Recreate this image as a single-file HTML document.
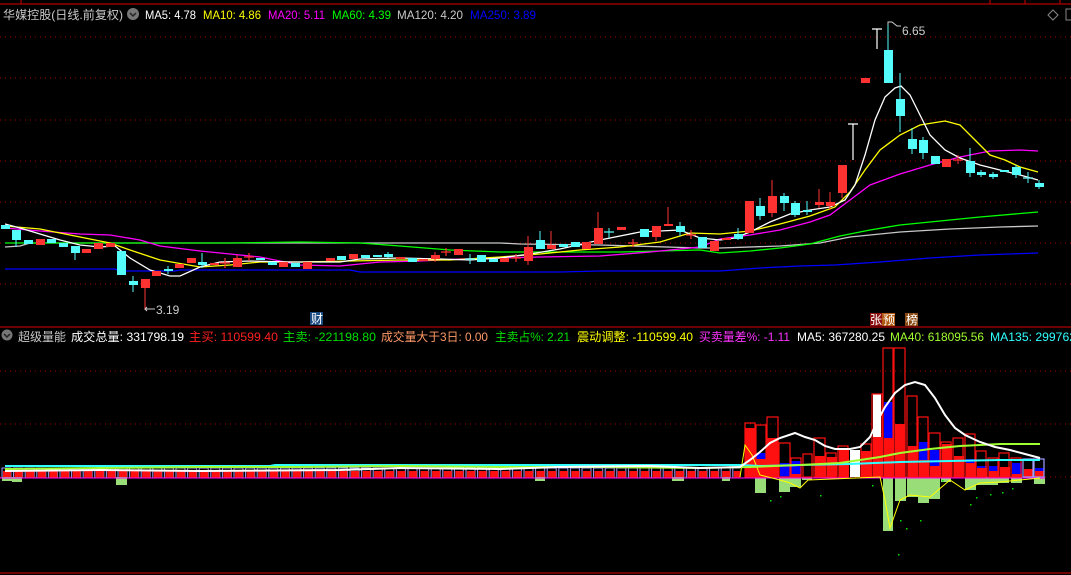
<!DOCTYPE html>
<html><head><meta charset="utf-8"><style>
html,body{margin:0;padding:0;background:#000;width:1071px;height:575px;overflow:hidden}
svg{display:block}
text{font-family:"Liberation Sans","Noto Sans CJK SC",sans-serif;font-size:12px}
</style></head><body>
<svg width="1071" height="575" viewBox="0 0 1071 575" xmlns="http://www.w3.org/2000/svg">
<rect width="1071" height="575" fill="#000"/>
<g stroke="#b00000" stroke-width="1.2">
<line x1="0" y1="4" x2="1071" y2="4"/>
<line x1="21" y1="0" x2="21" y2="4"/>
<line x1="990" y1="0" x2="990" y2="4"/><line x1="1025" y1="0" x2="1025" y2="4"/><line x1="1060" y1="0" x2="1060" y2="4"/>
<line x1="0" y1="327" x2="1071" y2="327"/>
<line x1="0" y1="573" x2="1071" y2="573"/>
</g>
<g stroke="#a00000" stroke-width="1" stroke-dasharray="1,4">
<line x1="0" y1="37" x2="1071" y2="37"/><line x1="0" y1="78" x2="1071" y2="78"/>
<line x1="0" y1="120" x2="1071" y2="120"/><line x1="0" y1="161" x2="1071" y2="161"/>
<line x1="0" y1="202" x2="1071" y2="202"/><line x1="0" y1="243" x2="1071" y2="243"/>
<line x1="0" y1="284" x2="1071" y2="284"/>
<line x1="0" y1="371" x2="1071" y2="371"/><line x1="0" y1="424" x2="1071" y2="424"/>
<line x1="0" y1="477" x2="1071" y2="477"/>
</g>
<text x="3" y="19" fill="#c8c8c8" font-size="13" textLength="120" lengthAdjust="spacingAndGlyphs">华媒控股(日线.前复权)</text>
<circle cx="133" cy="14" r="6" fill="#777"/><path d="M130 13l3 3 3-3" stroke="#222" stroke-width="1.5" fill="none"/>
<text x="145" y="19" fill="#fff" font-size="13" textLength="51" lengthAdjust="spacingAndGlyphs">MA5: 4.78</text>
<text x="203" y="19" fill="#ffff00" font-size="13" textLength="58" lengthAdjust="spacingAndGlyphs">MA10: 4.86</text>
<text x="268" y="19" fill="#ff00ff" font-size="13" textLength="57" lengthAdjust="spacingAndGlyphs">MA20: 5.11</text>
<text x="332" y="19" fill="#00ff00" font-size="13" textLength="59" lengthAdjust="spacingAndGlyphs">MA60: 4.39</text>
<text x="397" y="19" fill="#c8c8c8" font-size="13" textLength="66" lengthAdjust="spacingAndGlyphs">MA120: 4.20</text>
<text x="470" y="19" fill="#0000ff" font-size="13" textLength="66" lengthAdjust="spacingAndGlyphs">MA250: 3.89</text>
<path d="M1053 10l5 5-5 5-5-5z" stroke="#888" fill="none"/>
<rect x="1066" y="9" width="6" height="11" stroke="#888" fill="none"/>

<g fill="none" stroke-width="1.3">
<polyline stroke="#0000ff" points="5,269 115,269 120,271 175,271 180,270 350,270 360,272 560,272 600,271 720,271 760,268 800,266 835,265 880,262 930,258 980,255 1038,253"/>
<polyline stroke="#c8c8c8" points="5,247 20,246 30,243 110,243 500,243 520,244 600,245 700,248 720,248 780,246 820,243 850,237 900,232 950,229 1000,227 1038,226"/>
<polyline stroke="#00ff00" points="5,243 230,243 300,242 360,243 400,246 450,250 500,252 620,252 700,250 720,253 750,251 780,248 810,244 840,236 870,230 900,225 940,221 980,217 1038,212"/>
<polyline stroke="#ff00ff" points="5,228 40,231 80,234 110,235 140,240 160,246 200,251 230,254 260,257 300,265 340,266 380,262 420,261 460,259 500,258 540,257 600,256 650,252 700,247 720,239 750,235 780,230 810,222 830,215 850,200 870,185 900,174 930,165 960,157 990,151 1020,150 1038,151"/>
<polyline stroke="#ffff00" points="5,226 40,229 60,233 80,237 110,243 130,250 160,260 200,267 230,265 260,262 300,262 350,261 400,260 450,260 500,257 540,254 580,250 620,247 660,242 690,233 720,234 750,231 780,224 810,216 835,207 850,192 865,170 880,150 900,135 920,125 945,121 960,125 975,140 990,155 1005,160 1020,167 1038,172"/>
<polyline stroke="#ffffff" points="5,224 20,228 40,234 60,240 80,245 100,247 115,246 130,258 150,270 170,276 180,276 200,267 220,262 250,261 290,262 340,262 360,259 400,258 440,259 470,260 500,258 530,254 560,249 600,240 640,232 680,230 700,238 720,240 735,238 750,232 770,222 790,214 810,210 830,207 845,200 855,185 865,155 875,120 885,97 895,88 901,86 910,95 920,115 930,135 945,150 960,158 980,165 1000,170 1020,175 1038,180"/>
</g>

<g stroke="#54fcfc" stroke-width="1">
<line x1="16" y1="230" x2="16" y2="247"/><line x1="75" y1="246" x2="75" y2="260"/><line x1="121" y1="251" x2="121" y2="275"/>
<line x1="133" y1="276" x2="133" y2="292"/><line x1="202" y1="253" x2="202" y2="268"/><line x1="388" y1="252" x2="388" y2="258"/>
<line x1="540" y1="231" x2="540" y2="249"/><line x1="760" y1="198" x2="760" y2="220"/><line x1="784" y1="193" x2="784" y2="211"/>
<line x1="795" y1="201" x2="795" y2="217"/><line x1="807" y1="201" x2="807" y2="215"/><line x1="888" y1="25" x2="888" y2="83"/>
<line x1="900" y1="73" x2="900" y2="132"/><line x1="912" y1="128" x2="912" y2="154"/><line x1="923" y1="137" x2="923" y2="159"/>
<line x1="970" y1="148" x2="970" y2="177"/><line x1="981" y1="170" x2="981" y2="177"/><line x1="993" y1="172" x2="993" y2="179"/>
<line x1="1016" y1="165" x2="1016" y2="178"/><line x1="1039" y1="180" x2="1039" y2="189"/><line x1="1028" y1="172" x2="1028" y2="183"/>
<line x1="680" y1="222" x2="680" y2="236"/><line x1="738" y1="228" x2="738" y2="240"/><line x1="609" y1="228" x2="609" y2="238"/>
<line x1="470" y1="254" x2="470" y2="264"/><line x1="168" y1="266" x2="168" y2="274"/>
</g>
<g stroke="#ff3232" stroke-width="1">
<line x1="145" y1="279" x2="145" y2="310"/><line x1="528" y1="236" x2="528" y2="265"/><line x1="551" y1="231" x2="551" y2="249"/>
<line x1="598" y1="212" x2="598" y2="244"/><line x1="656" y1="226" x2="656" y2="241"/><line x1="668" y1="207" x2="668" y2="226"/>
<line x1="772" y1="180" x2="772" y2="217"/><line x1="819" y1="189" x2="819" y2="208"/><line x1="830" y1="192" x2="830" y2="210"/>
<line x1="842" y1="165" x2="842" y2="198"/><line x1="958" y1="155" x2="958" y2="164"/><line x1="435" y1="252" x2="435" y2="262"/>
<line x1="237" y1="255" x2="237" y2="267"/>
</g>
<g stroke-width="1.2">
<path d="M220 263h10M225 258v10M244 257h10M249 253v8M441 252h10M446 248v8M511 258h10M516 254v8M628 243h10M633 239v8M686 235h10M691 230v9M953 160h10M1023 178h10" stroke="#ff3232"/>
<path d="M465 259h10M604 232h10M1023 178h10" stroke="#54fcfc"/>
</g>
<g stroke="#fff" stroke-width="1.2"><path d="M848 124h10M853 124v36M872 29h10M877 29v20"/></g>
<g fill="#54fcfc">
<rect x="1" y="225" width="9" height="4"/><rect x="12" y="230" width="9" height="10"/><rect x="24" y="240" width="9" height="4"/>
<rect x="47" y="239" width="9" height="4"/><rect x="59" y="243" width="9" height="4"/><rect x="71" y="246" width="9" height="7"/>
<rect x="117" y="251" width="9" height="24"/><rect x="129" y="281" width="9" height="4"/><rect x="164" y="269" width="9" height="2"/>
<rect x="198" y="262" width="9" height="3"/><rect x="256" y="258" width="9" height="2"/><rect x="268" y="262" width="9" height="3"/>
<rect x="291" y="263" width="9" height="4"/><rect x="337" y="256" width="9" height="4"/><rect x="361" y="255" width="9" height="3"/>
<rect x="373" y="255" width="9" height="2"/><rect x="384" y="254" width="9" height="3"/><rect x="408" y="258" width="9" height="4"/>
<rect x="477" y="255" width="9" height="7"/><rect x="489" y="259" width="9" height="3"/><rect x="536" y="240" width="9" height="9"/>
<rect x="559" y="244" width="9" height="3"/><rect x="571" y="242" width="9" height="5"/><rect x="640" y="229" width="9" height="8"/>
<rect x="676" y="226" width="9" height="6"/><rect x="698" y="237" width="9" height="11"/><rect x="734" y="234" width="9" height="5"/>
<rect x="756" y="206" width="9" height="10"/><rect x="780" y="196" width="9" height="7"/><rect x="791" y="203" width="9" height="12"/>
<rect x="803" y="210" width="9" height="2"/><rect x="884" y="50" width="9" height="33"/><rect x="896" y="99" width="9" height="17"/>
<rect x="908" y="139" width="9" height="10"/><rect x="919" y="140" width="9" height="13"/><rect x="931" y="156" width="9" height="8"/>
<rect x="966" y="161" width="9" height="12"/><rect x="977" y="172" width="9" height="3"/><rect x="989" y="174" width="9" height="3"/>
<rect x="1000" y="170" width="9" height="2"/><rect x="1012" y="167" width="9" height="8"/><rect x="1035" y="183" width="9" height="4"/>
</g>
<g fill="#ff3232">
<rect x="36" y="239" width="9" height="6"/><rect x="82" y="249" width="9" height="4"/><rect x="94" y="243" width="9" height="6"/>
<rect x="106" y="243" width="9" height="4"/><rect x="141" y="279" width="9" height="9"/><rect x="152" y="271" width="9" height="5"/>
<rect x="175" y="264" width="9" height="4"/><rect x="187" y="258" width="9" height="5"/><rect x="210" y="263" width="9" height="2"/>
<rect x="233" y="258" width="9" height="9"/><rect x="279" y="262" width="9" height="5"/><rect x="303" y="262" width="9" height="7"/>
<rect x="326" y="258" width="9" height="3"/><rect x="349" y="254" width="9" height="5"/><rect x="396" y="257" width="9" height="2"/>
<rect x="419" y="259" width="9" height="2"/><rect x="431" y="255" width="9" height="4"/><rect x="454" y="249" width="9" height="6"/>
<rect x="500" y="258" width="9" height="4"/><rect x="524" y="247" width="9" height="14"/><rect x="547" y="245" width="9" height="4"/>
<rect x="582" y="242" width="9" height="7"/><rect x="594" y="228" width="9" height="16"/><rect x="617" y="227" width="9" height="3"/>
<rect x="652" y="226" width="9" height="11"/><rect x="664" y="224" width="9" height="2"/><rect x="710" y="241" width="9" height="10"/>
<rect x="722" y="238" width="9" height="2"/><rect x="745" y="201" width="9" height="32"/><rect x="768" y="196" width="9" height="17"/>
<rect x="815" y="202" width="9" height="3"/><rect x="826" y="202" width="9" height="4"/><rect x="838" y="165" width="9" height="28"/>
<rect x="861" y="78" width="9" height="5"/><rect x="942" y="159" width="9" height="8"/>
</g>
<g stroke="#ccc" stroke-width="1" fill="none"><path d="M145 309h10M147 307l-2 2 2 2M888 25v-3h4l5 4h4"/></g>
<text x="156" y="314" fill="#ccc" font-size="11">3.19</text>
<text x="902" y="35" fill="#ccc" font-size="11">6.65</text>
<rect x="310" y="312" width="13" height="13" fill="#1a4a80"/><text x="311" y="323" fill="#fff" font-size="11">财</text>
<rect x="870" y="313" width="12" height="13" fill="#8b1010"/><text x="870" y="324" fill="#fff" font-size="11">张</text>
<rect x="882" y="313" width="13" height="13" fill="#b05a10"/><text x="883" y="324" fill="#fff" font-size="11">预</text>
<rect x="905" y="313" width="13" height="13" fill="#8b4a13"/><text x="906" y="324" fill="#fff" font-size="11">榜</text>

<circle cx="7" cy="335" r="5.5" fill="#777"/><path d="M4 334l3 3 3-3" stroke="#222" stroke-width="1.5" fill="none"/>
<text x="18" y="341" fill="#c8c8c8" font-size="13" textLength="48" lengthAdjust="spacingAndGlyphs">超级量能</text>
<text x="71" y="341" fill="#fff" font-size="13" textLength="113" lengthAdjust="spacingAndGlyphs">成交总量: 331798.19</text>
<text x="189" y="341" fill="#ff2020" font-size="13" textLength="89" lengthAdjust="spacingAndGlyphs">主买: 110599.40</text>
<text x="283" y="341" fill="#00e000" font-size="13" textLength="93" lengthAdjust="spacingAndGlyphs">主卖: -221198.80</text>
<text x="381" y="341" fill="#ff9966" font-size="13" textLength="107" lengthAdjust="spacingAndGlyphs">成交量大于3日: 0.00</text>
<text x="495" y="341" fill="#00e000" font-size="13" textLength="75" lengthAdjust="spacingAndGlyphs">主卖占%: 2.21</text>
<text x="577" y="341" fill="#ffff00" font-size="13" textLength="116" lengthAdjust="spacingAndGlyphs">震动调整: -110599.40</text>
<text x="699" y="341" fill="#ff33ff" font-size="13" textLength="91" lengthAdjust="spacingAndGlyphs">买卖量差%: -1.11</text>
<text x="797" y="341" fill="#fff" font-size="13" textLength="88" lengthAdjust="spacingAndGlyphs">MA5: 367280.25</text>
<text x="890" y="341" fill="#a0ff30" font-size="13" textLength="94" lengthAdjust="spacingAndGlyphs">MA40: 618095.56</text>
<text x="990" y="341" fill="#30ffff" font-size="13" textLength="86" lengthAdjust="spacingAndGlyphs">MA135: 299762</text>

<defs><pattern id="vp" x="1" y="0" width="11.6" height="575" patternUnits="userSpaceOnUse">
<rect x="1" y="468" width="9" height="10" fill="none" stroke="#a0a0ff" stroke-width="1"/>
<rect x="2" y="471" width="8" height="7" fill="#ff1010"/></pattern></defs>
<rect x="0" y="465" width="740" height="14" fill="url(#vp)"/>
<g fill="#98dd78"><rect x="2" y="477" width="10" height="4"/><rect x="12" y="477" width="10" height="5"/><rect x="116" y="477" width="11" height="8"/><rect x="535" y="477" width="10" height="4"/><rect x="672" y="477" width="12" height="4"/></g>

<g fill="#98dd78">
<rect x="722" y="477" width="8" height="4"/><rect x="755" y="477" width="11" height="16"/><rect x="779" y="477" width="11" height="15"/>
<rect x="790" y="477" width="11" height="10"/><rect x="802" y="477" width="10" height="3"/><rect x="883" y="477" width="10" height="54"/>
<rect x="895" y="477" width="11" height="24"/><rect x="907" y="477" width="11" height="20"/><rect x="918" y="477" width="11" height="26"/>
<rect x="929" y="477" width="11" height="22"/><rect x="941" y="477" width="10" height="5"/><rect x="965" y="477" width="11" height="13"/>
<rect x="976" y="477" width="11" height="8"/><rect x="987" y="477" width="11" height="8"/><rect x="998" y="477" width="11" height="6"/>
<rect x="1011" y="477" width="11" height="6"/><rect x="1034" y="477" width="11" height="7"/>
</g>
<g fill="#ff1010">
<rect x="745" y="428" width="10" height="49"/><rect x="756" y="459" width="10" height="18"/><rect x="767" y="438" width="11" height="39"/>
<rect x="791" y="474" width="10" height="3"/><rect x="815" y="456" width="10" height="21"/><rect x="827" y="457" width="10" height="20"/>
<rect x="839" y="450" width="10" height="27"/><rect x="861" y="451" width="10" height="26"/><rect x="873" y="437" width="10" height="40"/>
<rect x="884" y="438" width="10" height="39"/><rect x="895" y="424" width="10" height="53"/><rect x="908" y="446" width="10" height="31"/>
<rect x="919" y="460" width="10" height="17"/><rect x="930" y="466" width="10" height="11"/><rect x="942" y="444" width="10" height="33"/>
<rect x="954" y="456" width="10" height="21"/><rect x="966" y="463" width="10" height="14"/><rect x="977" y="468" width="10" height="9"/>
<rect x="989" y="471" width="10" height="6"/><rect x="1000" y="467" width="10" height="10"/><rect x="1012" y="474" width="10" height="3"/>
<rect x="1024" y="469" width="9" height="8"/><rect x="1035" y="471" width="9" height="6"/>
</g>
<g fill="#0000ff">
<rect x="756" y="453" width="10" height="6"/><rect x="780" y="463" width="10" height="14"/><rect x="791" y="461" width="10" height="13"/>
<rect x="884" y="402" width="10" height="36"/><rect x="919" y="442" width="10" height="18"/><rect x="930" y="450" width="10" height="16"/>
<rect x="966" y="459" width="10" height="4"/><rect x="977" y="466" width="10" height="2"/><rect x="989" y="466" width="10" height="5"/>
<rect x="1012" y="463" width="10" height="11"/><rect x="1035" y="468" width="9" height="3"/>
</g>
<g fill="#fff"><rect x="850" y="450" width="10" height="27"/><rect x="873" y="394" width="8" height="43"/></g>
<g fill="none" stroke="#ff1010" stroke-width="1.2">
<rect x="745" y="423" width="10" height="54"/><rect x="756" y="425" width="10" height="52"/><rect x="767" y="417" width="11" height="60"/>
<rect x="779" y="443" width="11" height="34"/><rect x="791" y="458" width="10" height="19"/><rect x="803" y="454" width="9" height="23"/>
<rect x="814" y="438" width="11" height="39"/><rect x="826" y="453" width="10" height="24"/><rect x="838" y="446" width="10" height="31"/>
<rect x="861" y="444" width="10" height="33"/><rect x="872" y="394" width="10" height="83"/><rect x="883" y="348" width="10" height="129"/>
<rect x="894" y="348" width="11" height="129"/><rect x="907" y="396" width="10" height="81"/><rect x="918" y="417" width="10" height="60"/>
<rect x="929" y="433" width="11" height="44"/><rect x="941" y="442" width="10" height="35"/><rect x="953" y="438" width="10" height="39"/>
<rect x="965" y="434" width="10" height="43"/><rect x="976" y="451" width="10" height="26"/><rect x="988" y="458" width="10" height="19"/>
<rect x="999" y="453" width="10" height="24"/><rect x="1011" y="458" width="10" height="19"/>
</g>
<g fill="none" stroke="#a0a0ff" stroke-width="1.2"><rect x="1023" y="459" width="10" height="18"/><rect x="1034" y="459" width="10" height="18"/></g>
<line x1="0" y1="478" x2="1045" y2="478" stroke="#ff00ff" stroke-width="1"/>
<g fill="none">
<polyline stroke="#ffff00" stroke-width="1" points="740,477 745,445 752,455 760,475 780,480 790,483 800,488 808,480 880,477 885,500 890,528 900,500 910,495 930,497 950,480 965,490 980,483 1000,482 1040,478"/>
<polyline stroke="#30ffff" stroke-width="2" points="5,466 270,466 275,465 740,465 760,466 800,465 850,464 900,462 950,461 1000,460 1040,460"/>
<polyline stroke="#a0ff30" stroke-width="2" points="5,469 100,468 200,467 300,467 400,466 500,467 600,467 700,468 750,467 800,465 840,463 880,457 900,453 930,449 960,446 1000,444 1040,444"/>
<polyline stroke="#ffffff" stroke-width="2" points="5,471 100,470 200,471 340,470 400,468 500,469 560,467 650,466 700,468 740,467 750,460 760,452 770,443 780,438 795,433 805,437 815,440 825,446 835,449 850,449 860,447 870,437 878,420 885,407 895,393 905,385 915,382 925,385 935,398 945,415 955,428 965,435 980,442 995,447 1010,450 1025,454 1040,458"/>
</g>
<g fill="#00e000">
<rect x="770" y="500" width="1.5" height="1.5"/><rect x="780" y="496" width="1.5" height="1.5"/><rect x="820" y="495" width="1.5" height="1.5"/>
<rect x="872" y="485" width="1.5" height="1.5"/><rect x="900" y="520" width="1.5" height="1.5"/><rect x="906" y="528" width="1.5" height="1.5"/>
<rect x="920" y="520" width="1.5" height="1.5"/><rect x="976" y="497" width="1.5" height="1.5"/><rect x="990" y="494" width="1.5" height="1.5"/>
<rect x="1002" y="492" width="1.5" height="1.5"/><rect x="1012" y="488" width="1.5" height="1.5"/><rect x="898" y="554" width="1.5" height="1.5"/>
<rect x="970" y="504" width="1.5" height="1.5"/><rect x="942" y="480" width="1.5" height="1.5"/>
</g>
</svg>
</body></html>
